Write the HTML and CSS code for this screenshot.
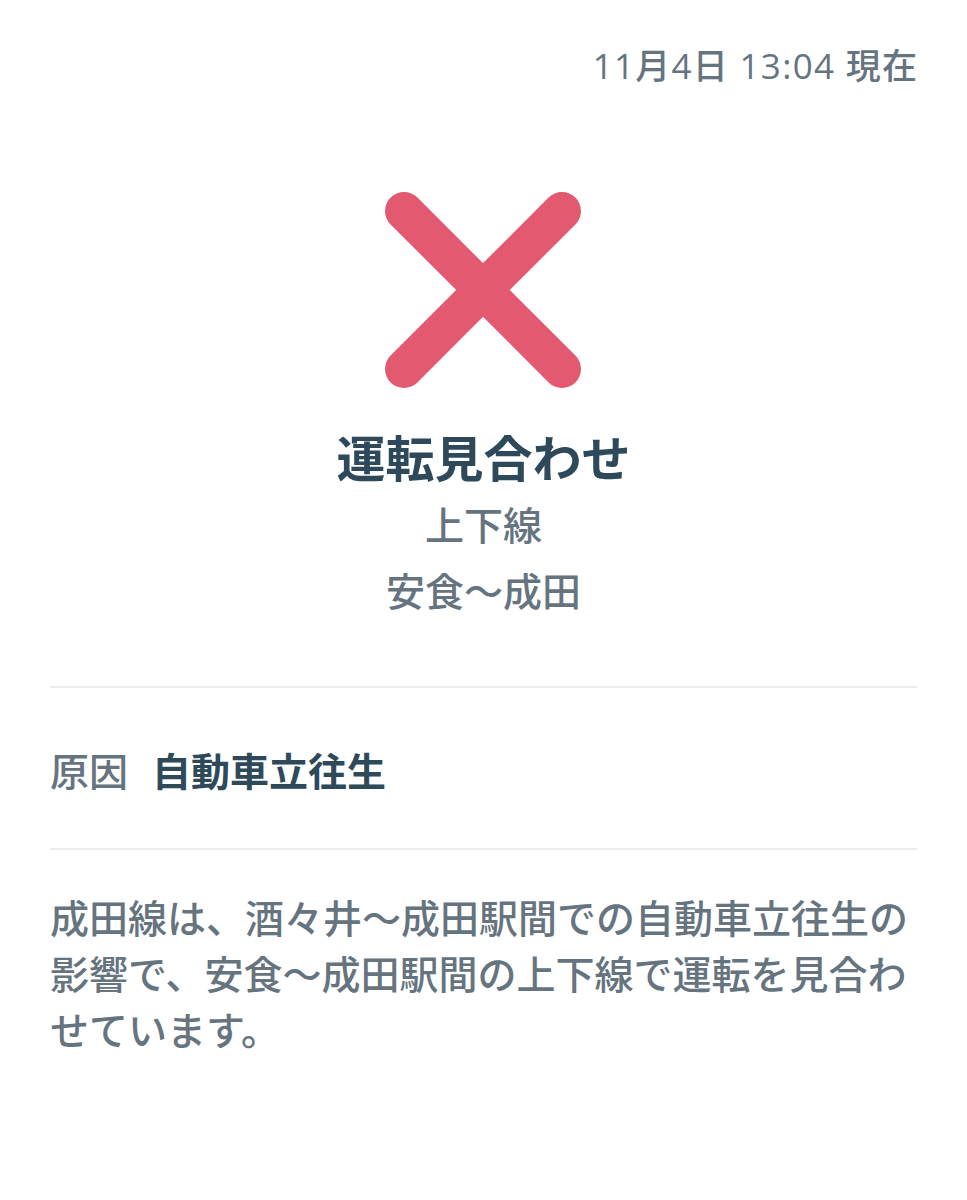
FILE: index.html
```html
<!DOCTYPE html>
<html lang="ja">
<head>
<meta charset="utf-8">
<link rel="stylesheet" href="styles.css">
</head>
<body>
<main class="page">
  <div class="timestamp">11月4日 13:04 現在</div>
  <section class="status">
    <svg class="status-icon" width="200" height="200" viewBox="0 0 200 200" aria-hidden="true">
      <path d="M21 21 L179 179 M179 21 L21 179" stroke="#e35a70" stroke-width="38" stroke-linecap="round" fill="none"/>
    </svg>
    <h1 class="status-title">運転見合わせ</h1>
    <div class="status-sub">上下線</div>
    <div class="status-sub">安食〜成田</div>
  </section>
  <hr class="divider">
  <div class="cause">
    <span class="cause-label">原因</span>
    <span class="cause-value">自動車立往生</span>
  </div>
  <hr class="divider">
  <p class="detail">成田線は、酒々井〜成田駅間での自動車立往生の影響で、安食〜成田駅間の上下線で運転を見合わせています。</p>
</main>
</body>
</html>
```
FILE: styles.css
```css
html, body {
  margin: 0;
  padding: 0;
  background: #ffffff;
}
body {
  font-family: "Noto Sans CJK JP", "Noto Sans", sans-serif;
  font-weight: 500;
  color: #66747f;
}
.page {
  width: 967px;
  box-sizing: border-box;
  padding: 0 50px;
}
.timestamp {
  text-align: right;
  font-family: "Open Sans", "Noto Sans CJK JP", sans-serif;
  font-size: 35px;
  letter-spacing: 1.3px;
  margin-right: -1.3px;
  line-height: 44px;
  padding-top: 44px;
  color: #66747f;
}
.status {
  display: flex;
  flex-direction: column;
  align-items: center;
  padding-top: 102px;
  padding-bottom: 64px;
}
.status-icon {
  display: block;
  margin-left: -2px;
}
.status-title {
  margin: 36px 0 4px;
  font-size: 49px;
  line-height: 60px;
  font-weight: 700;
  color: #2e4a5a;
}
.status-sub {
  font-size: 39px;
  line-height: 66px;
  color: #66747f;
}
.divider {
  margin: 0;
  border: none;
  height: 2px;
  background: #ececec;
}
.cause {
  display: flex;
  align-items: center;
  gap: 24px;
  height: 158px;
  padding-top: 2px;
  font-size: 39px;
}
.cause-label {
  color: #66747f;
}
.cause-value {
  font-weight: 700;
  color: #2e4a5a;
}
.detail {
  margin: 38px 0 0;
  font-size: 39px;
  line-height: 56px;
  color: #66747f;
}
```
